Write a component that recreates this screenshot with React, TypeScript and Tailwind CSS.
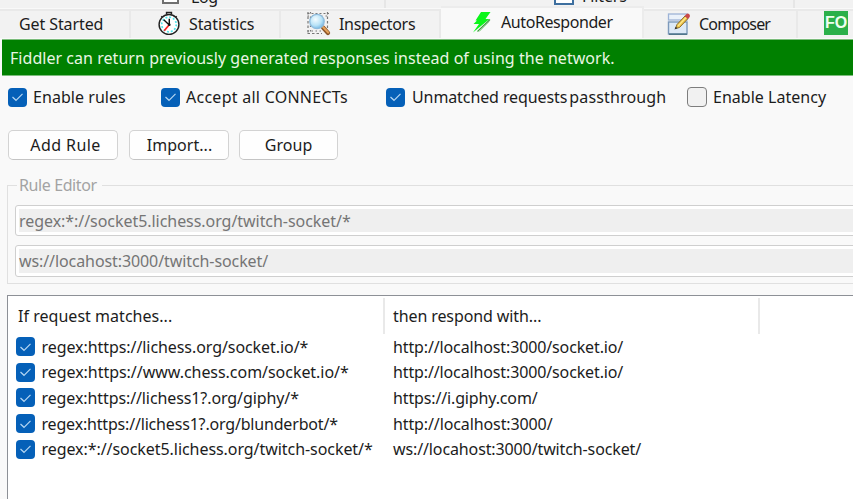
import type { ReactNode } from "react";

function Check({ on = true }: { on?: boolean }) {
  return on ? (
    <span className="flex size-[19px] shrink-0 items-center justify-center rounded-[4px] bg-[#0560b8]">
      <svg width="13" height="10" viewBox="0 0 13 10" fill="none" stroke="#b5d6f3" strokeWidth="1.2">
        <path d="M1.5 5 L5 8.3 L11.5 1.8" />
      </svg>
    </span>
  ) : (
    <span className="size-[20px] shrink-0 rounded-[4px] border-[1.5px] border-[#7d7d7d] bg-[#f1f1f1]" />
  );
}

function Stopwatch() {
  return (
    <svg width="24" height="25" viewBox="0 0 24 26" fill="none">
      <path d="M9.5 3.5 V1.5 H14.5 V3.5" stroke="#222" strokeWidth="1.6" />
      <path d="M4 5.5 L5.5 7 M20 5.5 L18.500 7" stroke="#222" strokeWidth="1.6" />
      <circle cx="12" cy="14" r="10.3" fill="#fff" stroke="#222" strokeWidth="1.5" />
      <circle cx="12" cy="14" r="7.6" stroke="#4fe4ea" strokeWidth="1.8" strokeDasharray="2 1.98" />
      <path d="M12.300 8 V14.500 M12.300 14.500 L6.500 9" stroke="#111" strokeWidth="1.5" />
      <path d="M12 14.500 L7 20.500" stroke="#f22" strokeWidth="1.8" />
      <circle cx="12.300" cy="14.300" r="1.400" fill="#111" />
    </svg>
  );
}

function Inspect() {
  return (
    <svg width="25" height="25" viewBox="0 0 25 25" fill="none">
      <defs>
        <radialGradient id="lens" cx="0.4" cy="0.35" r="0.7">
          <stop offset="0" stopColor="#f4fcff" />
          <stop offset="0.6" stopColor="#b9e3f7" />
          <stop offset="1" stopColor="#6fb4e2" />
        </radialGradient>
      </defs>
      <g stroke="#777" strokeWidth="1.200">
        <path d="M1.500 2.500 H23" strokeDasharray="2 2" />
        <path d="M1.500 5 H23" strokeDasharray="1.500 3" />
        <path d="M2 1 V23" strokeDasharray="2.500 2" />
        <path d="M4.500 1 V23" strokeDasharray="1.500 3" />
        <path d="M21.500 1 V17" strokeDasharray="2.500 2" />
        <path d="M1.500 20 H15" strokeDasharray="1.500 2.500" />
        <path d="M1.500 22.500 H16" strokeDasharray="2.500 2" />
      </g>
      <path d="M17 16.500 L22 22" stroke="#8b5428" strokeWidth="4.200" strokeLinecap="round" />
      <path d="M17 16 L22.200 21.500" stroke="#e4a25a" strokeWidth="2" strokeLinecap="round" />
      <circle cx="11" cy="10.500" r="7.200" fill="url(#lens)" stroke="#8fbbdc" strokeWidth="1.300" />
    </svg>
  );
}

function Bolt() {
  return (
    <svg width="20" height="22" viewBox="0 0 20 22">
      <path d="M9 1 H18.500 L13.500 8 H17.500 L1 21.500 L7 13 H1.500 L5 9.500 H3.500 Z" fill="#0bf51a" />
      <path d="M18 8.500 L5.500 20.500" stroke="#3b9a3b" strokeWidth="1.100" />
      <path d="M17.500 10.500 L7.500 20.500" stroke="#9ad49a" strokeWidth="0.800" />
    </svg>
  );
}

function Compose() {
  return (
    <svg width="24" height="24" viewBox="0 0 24 24" fill="none">
      <rect x="1.500" y="2" width="18.500" height="6" fill="#eaf1fa" stroke="#9db3d6" strokeWidth="1.300" />
      <rect x="1.500" y="10" width="18.500" height="12" fill="#dde9f6" stroke="#7d99bb" strokeWidth="1.400" />
      <path d="M2 22.200 H20" stroke="#4d7387" strokeWidth="1.500" />
      <path d="M8.500 16.500 L10 12.500 L18 4 L21 6.500 L12.500 15.500 Z" fill="#f0c648" stroke="#8a6a2c" strokeWidth="1" />
      <path d="M11 14 L19.500 5" stroke="#fbe78f" strokeWidth="1.200" />
      <path d="M17.500 4 L19.500 2 Q21 1 22.500 2.500 Q23.500 4 22.500 5.200 L21 7 Z" fill="#c9494b" />
      <path d="M7.500 17.500 L8.700 14.800 L10.500 16.300 Z" fill="#333" />
    </svg>
  );
}

function Tab({ className, children }: { className: string; children: ReactNode }) {
  return (
    <div className={`flex h-[29px] shrink-0 items-center border-t-2 border-r-2 border-[#e9e9e9] bg-[#f2f2f2] ${className}`}>
      {children}
    </div>
  );
}

function Button({ className, children }: { className: string; children: ReactNode }) {
  return (
    <button className={`flex h-[30px] items-center justify-center rounded-[5px] border-[1.5px] border-[#d3d3d3] border-b-[#c4c4c4] bg-[#fefefe] ${className}`}>
      {children}
    </button>
  );
}

const rules = [
  { match: "regex:https://lichess.org/socket.io/*", mt: "tracking-[-0.07px]", reply: "http://localhost:3000/socket.io/", rt: "tracking-[-0.13px]" },
  { match: "regex:https://www.chess.com/socket.io/*", mt: "tracking-[-0.04px]", reply: "http://localhost:3000/socket.io/", rt: "tracking-[-0.13px]" },
  { match: "regex:https://lichess1?.org/giphy/*", mt: "tracking-[-0.1px]", reply: "https://i.giphy.com/", rt: "tracking-[-0.14px]" },
  { match: "regex:https://lichess1?.org/blunderbot/*", mt: "tracking-[-0.18px]", reply: "http://localhost:3000/", rt: "tracking-[-0.11px]" },
  { match: "regex:*://socket5.lichess.org/twitch-socket/*", mt: "tracking-[-0.06px]", reply: "ws://locahost:3000/twitch-socket/", rt: "tracking-[-0.12px]" },
];

export default function App() {
  return (
    <div className="flex h-[499px] w-[853px] flex-col overflow-hidden bg-[#f9f9f9] font-['Noto_Sans','Liberation_Sans',sans-serif] text-[16px] leading-[20px] whitespace-nowrap text-[#1c1c1c]">
      {/* lower edge of the first tab row */}
      <div className="flex h-[8px] shrink-0 items-end overflow-hidden bg-[#f2f2f2]">
        <div className="flex h-[8px] w-[386px] items-end border-r-2 border-[#e6e6e6] pl-[162px]">
          <span className="mb-[4px] h-[14px] w-[17px] border-2 border-[#707070] bg-white" />
          <span className="mb-px ml-[12px] tracking-[-0.4px]">Log</span>
        </div>
        <div className="flex h-[8px] w-[409px] items-end border-r-2 border-[#e6e6e6] pl-[168px]">
          <span className="mb-[3px] h-[14px] w-[20px] border-2 border-[#3e6f9f] bg-white" />
          <span className="mb-[2px] ml-[8px] tracking-[-0.1px]">Filters</span>
        </div>
      </div>

      {/* main tab row */}
      <div className="-mt-[2px] flex h-[32px] shrink-0 items-end">
        <Tab className="w-[131px] pb-[3px] pl-[19px]"><span className="pt-[2px] tracking-[-0.1px]">Get Started</span></Tab>
        <Tab className="w-[150px] pb-[3px] pl-[26px]"><Stopwatch /><span className="ml-[8px] pt-[2px] tracking-[-0.1px]">Statistics</span></Tab>
        <Tab className="w-[160px] pb-[3px] pl-[25px]"><Inspect /><span className="ml-[8px] pt-[2px] tracking-[-0.3px]">Inspectors</span></Tab>
        <div className="flex h-[32px] w-[203px] shrink-0 items-center border-t-2 border-r-2 border-[#ececec] bg-[#f9f9f9] pb-[3px] pl-[31px]">
          <Bolt /><span className="ml-[9px] tracking-[-0.42px]">AutoResponder</span>
        </div>
        <Tab className="w-[154px] pb-[2px] pl-[23px]"><Compose /><span className="ml-[8px] pt-px tracking-[-0.8px]">Composer</span></Tab>
        <Tab className="w-[60px] pb-[3px] pl-[26px]">
          <span className="flex size-[24px] items-center justify-center bg-[#2bb04a] font-['Liberation_Sans',sans-serif] text-[16px] font-bold text-[#effff0]">FO</span>
        </Tab>
      </div>

      <div className="mt-px ml-[2px] flex h-[37px] shrink-0 items-center border-t border-b border-[#7cbd7c] bg-[#008000] pl-[8px] text-[#e9f6e4]">
        <span className="tracking-[0.04px]">Fiddler can return previously generated responses instead of using the network.</span>
      </div>

      <div className="mt-[10px] flex h-[22px] shrink-0 items-center pl-[8px]">
        <label className="flex w-[153px] items-center gap-[6px]"><Check /><span className="tracking-[0.05px]">Enable rules</span></label>
        <label className="flex w-[225px] items-center gap-[6px]"><Check /><span className="tracking-[0.26px]">Accept all CONNECTs</span></label>
        <label className="flex w-[301px] items-center gap-[7px]">
          <Check />
          <span className="flex gap-[2px]"><span className="tracking-[-0.1px]">Unmatched requests</span><span className="tracking-[0.15px]">passthrough</span></span>
        </label>
        <label className="flex items-center gap-[6px]"><Check on={false} /><span className="tracking-[0.02px]">Enable Latency</span></label>
      </div>

      <div className="mt-[22px] flex h-[30px] shrink-0 pl-[8px]">
        <Button className="w-[110px] pl-[5px] tracking-[0.4px]">Add Rule</Button>
        <Button className="ml-[11px] w-[100px] pl-px tracking-[0.05px]">Import...</Button>
        <Button className="ml-[10px] w-[99px] tracking-[0.05px]">Group</Button>
      </div>

      {/* rule editor group */}
      <fieldset className="mt-[15px] -mr-[10px] ml-[7px] h-[109px] shrink-0 border-[1.5px] border-[#e0e0e0] pt-[10px] text-[#757575]">
        <legend className="ml-[9px] px-[2px] pr-[5px] text-[#a3a3a3] tracking-[-0.4px]">Rule Editor</legend>
        <div className="-mr-[4px] ml-[7px] h-[31px] rounded-[3px] border-[1.5px] border-[#cfcfcf] bg-white p-[3px]">
          <div className="flex h-full items-center bg-[#efefef] tracking-[-0.05px]">regex:*://socket5.lichess.org/twitch-socket/*</div>
        </div>
        <div className="mt-[9px] -mr-[4px] ml-[7px] h-[32px] rounded-[3px] border-[1.5px] border-[#cfcfcf] bg-white p-[3px]">
          <div className="flex h-full items-center bg-[#efefef] tracking-[-0.09px]">ws://locahost:3000/twitch-socket/</div>
        </div>
      </fieldset>

      {/* rule list */}
      <div className="mt-[11px] -mr-[4px] ml-[7px] grow border-[1.5px] border-b-0 border-[#8d9096] bg-white">
        <div className="flex h-[38px] items-center pt-[1px]">
          <div className="flex h-[36px] w-[377px] items-center border-r-2 border-[#e9e9e9] pl-[10px] tracking-[0.03px]">If request matches...</div>
          <div className="flex h-[36px] w-[375px] items-center border-r-2 border-[#e9e9e9] pl-[8px] tracking-[-0.1px]">then respond with...</div>
        </div>
        {rules.map((r) => (
          <div key={r.match} className="flex h-[25.6px] items-center pl-[8px]">
            <Check />
            <span className={`ml-[6.5px] w-[351.5px] ${r.mt}`}>{r.match}</span>
            <span className={r.rt}>{r.reply}</span>
          </div>
        ))}
      </div>
    </div>
  );
}
